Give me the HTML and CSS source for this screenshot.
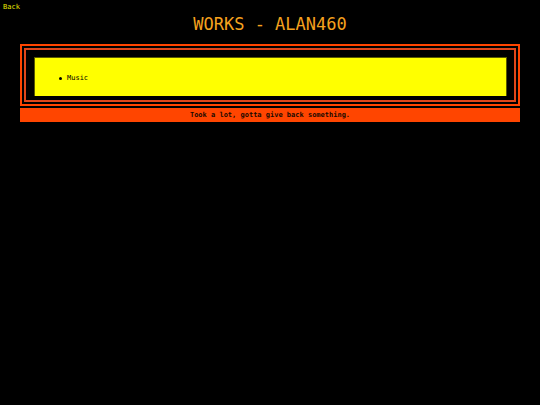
FILE: index.html
```html
<!DOCTYPE html>
<html>
<head>
<meta charset="utf-8">
<title>Works - alan460</title>
<link rel="stylesheet" href="styles.css">
</head>
<body>
<a class="back" href="#">Back</a>
<h1 class="title">WORKS - ALAN460</h1>
<div class="panel">
  <div class="frame">
    <div class="inner">
      <div class="box">
        <ul class="list">
          <li class="item">Music</li>
        </ul>
      </div>
    </div>
  </div>
  <div class="footer">Took a lot, gotta give back something.</div>
</div>
</body>
</html>
```
FILE: styles.css
```css
html, body {
  margin: 0;
  padding: 0;
  background: #000;
}
body {
  font-family: "DejaVu Sans Mono", "Liberation Mono", monospace;
  height: 405px;
}
.back {
  display: block;
  padding: 3px 0 0 3px;
  height: 9px;
  font-size: 7px;
  line-height: 9px;
  color: #e8e800;
  text-decoration: none;
}
.title {
  margin: 2px 0 0 0;
  height: 20px;
  text-align: center;
  font-size: 17px;
  line-height: 20px;
  font-weight: normal;
  color: #f5a21e;
}
.panel {
  margin: 10px 20px 0 20px;
}
.frame {
  border: 2px solid #ff4500;
  padding: 2px;
  background: #000;
}
.inner {
  border: 2px solid #e0461a;
  padding: 7px 7px 4px 8px;
}
.box {
  height: 39px;
  background: #ffff00;
  border: 1px solid #5a5a00;
  border-bottom-width: 0;
  display: flex;
  align-items: center;
  padding-top: 2px;
  box-sizing: border-box;
}
.list {
  margin: 0;
  padding: 0 0 0 24px;
  font-size: 7px;
  line-height: 9px;
  color: #000;
  list-style: none;
}
.item {
  display: flex;
  align-items: center;
  gap: 5px;
}
.item::before {
  content: "";
  width: 3px;
  height: 3px;
  border-radius: 50%;
  background: #000;
}
.footer {
  margin-top: 2px;
  height: 14px;
  background: #ff4500;
  text-align: center;
  font-size: 7px;
  font-weight: bold;
  line-height: 14px;
  color: #1a0a00;
}
```
